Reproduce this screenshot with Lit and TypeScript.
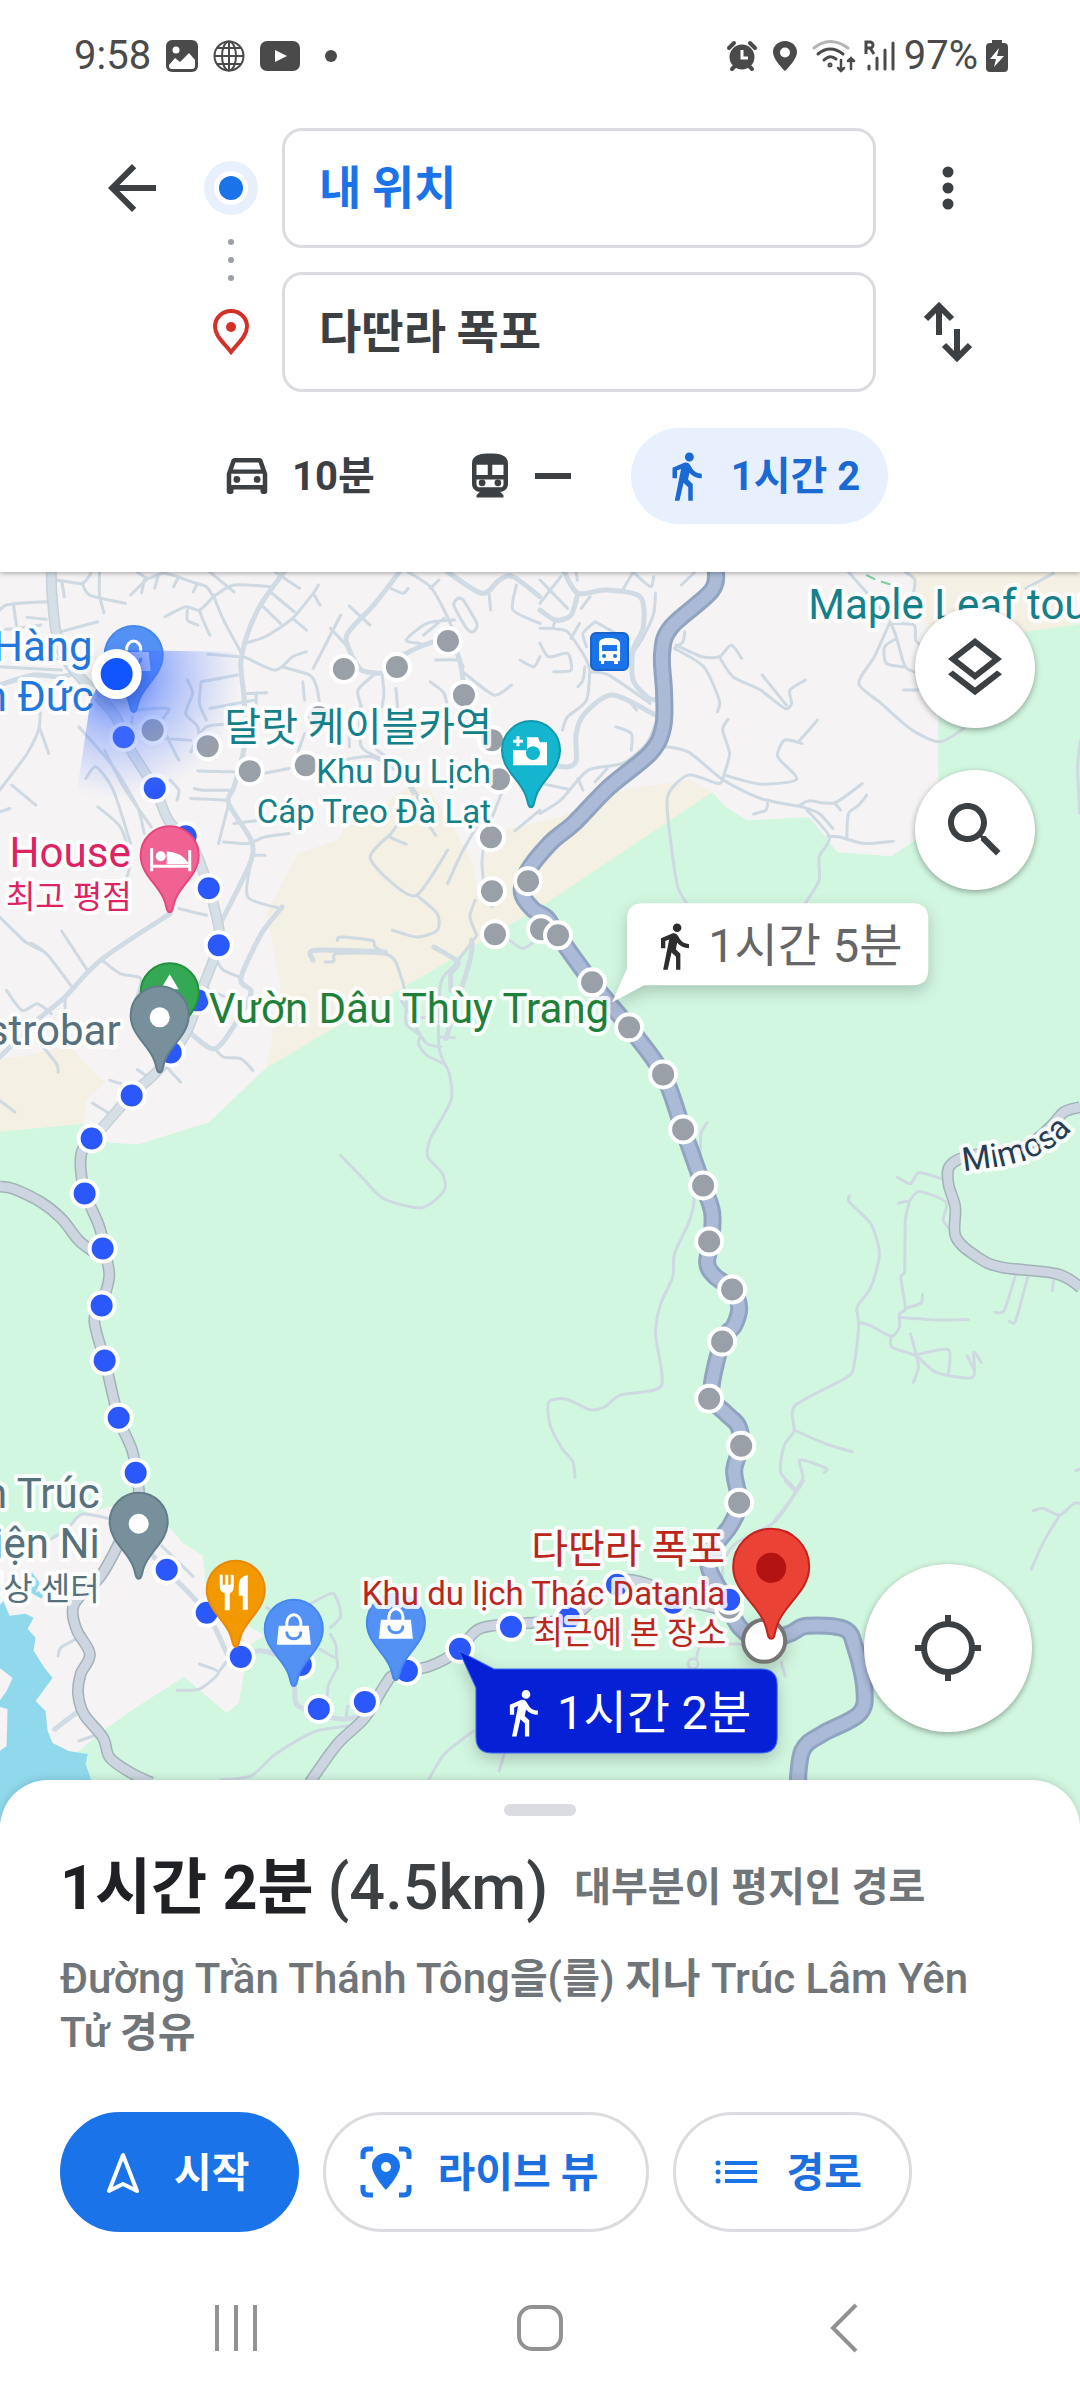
import { LitElement, html, svg, css } from "lit";
import { customElement } from "lit/decorators.js";

/* ---------- map data ---------- */

// Each survey sheet has an origin and a horizontal resolution; vertical is always 3 units per px.
const SHEETS: Record<string, [number, number, number]> = {
  A: [0, 560, 2.904],
  B: [540, 560, 2.904],
  C: [0, 900, 2.904],
  D: [540, 1040, 2.904],
  E: [0, 1300, 2.904],
  F: [500, 1480, 2.703],
};

type Pt = [number, number];

const parse = (s: string): Pt[] =>
  s.split(" ").map((p) => p.split(",").map(Number) as Pt);

const project = (sheet: string, s: string): Pt[] => {
  const [ox, oy, k] = SHEETS[sheet];
  return parse(s).map(([x, y]) => [ox + x / k, oy + y / 3]);
};

// Catmull-Rom spline through the points, written as cubic segments.
const curve = (p: Pt[], tension = 8): string => {
  let d = `M${p[0][0].toFixed(1)} ${p[0][1].toFixed(1)}`;
  for (let i = 0; i < p.length - 1; i++) {
    const a = p[i - 1] ?? p[i];
    const b = p[i];
    const c = p[i + 1];
    const e = p[i + 2] ?? c;
    const n = [
      b[0] + (c[0] - a[0]) / tension,
      b[1] + (c[1] - a[1]) / tension,
      c[0] - (e[0] - b[0]) / tension,
      c[1] - (e[1] - b[1]) / tension,
      c[0],
      c[1],
    ].map((v) => v.toFixed(1));
    d += `C${n.join(" ")}`;
  }
  return d;
};

const LANES: Record<string, string[]> = {
  A: [
    "0,150 20,135 80,128 145,125", "40,130 50,205", "80,172 135,178", "160,60 180,62 240,70 265,40",
    "180,62 188,110", "240,70 262,105 365,130", "290,36 290,105 303,158", "0,210 50,205 120,195",
    "160,220 285,185", "90,310 200,290", "0,320 90,325 180,330", "120,370 115,500 80,580 0,690",
    "115,500 143,580", "35,675 105,735", "0,755 30,745", "400,36 430,55 480,40 570,70 600,80 620,110",
    "430,55 380,105", "420,60 412,98", "460,48 450,85", "520,50 505,80", "575,70 562,95",
    "620,110 680,75 790,80", "480,170 540,140 580,150 620,110", "580,150 590,180 610,225",
    "545,150 545,180 575,195", "610,36 680,95", "620,105 650,180 705,285",
    "710,250 770,230 850,175 910,100 925,75", "785,95 855,155", "760,135 815,190", "800,36 870,85",
    "850,175 890,210", "910,100 930,135", "710,290 800,330 850,290 890,275", "605,283 700,290",
    "820,320 900,345 920,380 930,440", "1110,340 1115,400 1110,440", "990,165 910,325",
    "960,205 1010,260", "1015,138 1075,195", "1125,80 1170,100 1185,85",
    "1185,36 1250,80 1290,150 1320,220", "1250,85 1275,60", "1320,180 1240,190 1180,240 1220,250",
    "1290,175 1230,225", "1330,115 1345,120 1385,190 1375,215 1355,205 1318,135 1330,115",
    "1420,100 1425,150", "1500,75 1490,150 1568,190", "1350,340 1435,405 1485,375",
    "1265,300 1330,300 1345,320", "1250,365 1290,400 1300,450", "1050,440 1040,390 1085,345",
    "1150,385 1155,440", "545,360 560,400 540,460 575,500 580,560", "585,365 580,430 600,480",
    "585,365 690,345", "610,445 740,420", "710,400 775,398", "745,400 745,460",
    "250,655 280,620 330,690 380,850", "305,570 360,680 440,800", "230,500 330,620 400,740 420,820",
    "285,740 350,800 380,900 360,980", "390,450 490,445 470,490 510,580", "470,535 555,540",
    "555,575 600,500 710,490", "575,632 680,635 760,640 840,625", "555,715 660,720",
    "565,685 590,690 680,690", "650,845 720,850 770,830 840,820", "665,730 635,850", "680,790 760,780",
    "730,885 770,885", "730,900 720,1010 820,1045", "520,1045 600,1065", "860,630 865,580 885,520",
    "1015,480 1015,560", "1100,450 1090,560 1150,610 1200,700", "995,600 1080,590 1160,640 1210,700 1210,740",
    "1045,440 1050,560 1120,600", "1130,830 1200,740 1265,825", "1130,830 1180,852",
    "1130,825 1075,890 1130,960 1210,1005 1300,870", "1210,1005 1270,1060 1270,1110 1210,1130 1140,1110",
    "1395,780 1340,880 1300,970", "1460,690 1420,800 1400,900 1410,1000 1430,1040", "1568,750 1495,812",
    "0,1070 70,1140 120,1170", "480,520 520,600", "380,545 385,470", "495,660 520,690 515,720",
    "1510,300 1550,320 1568,290", "880,365 885,420",
  ],
  B: [
    "0,60 80,145", "60,50 0,130", "105,36 108,60", "145,110 120,145", "240,90 270,36",
    "270,36 320,80 330,50", "335,100 330,160 300,230 262,290", "45,180 40,205 80,215 130,290 145,330",
    "0,205 40,205", "90,235 115,190", "0,250 25,290 80,280 90,330 40,335", "160,185 125,220 135,260",
    "160,185 220,220", "145,335 200,345 320,430", "145,320 135,420 80,470 65,510", "130,320 125,360 110,380",
    "265,430 280,450", "220,500 265,520 265,570", "0,760 60,720 140,630 240,610 310,550 335,490",
    "15,672 85,688", "110,655 125,690", "160,665 195,625", "410,75 450,36", "420,215 415,245 395,260",
    "395,255 470,290 520,290 555,255 585,295", "390,265 475,320 520,420 515,455",
    "520,290 560,350 640,390 710,445 730,430 725,390 770,360", "645,345 715,435",
    "545,478 530,510 550,580 535,640 530,660", "535,645 640,672 745,657 690,590 710,540 760,550",
    "750,545 805,480", "355,558 430,575 530,658 640,715 760,740", "750,738 780,722 855,728 935,670",
    "855,728 872,750", "530,660 515,670 430,645 370,710 380,850 400,980 425,1028",
    "620,762 655,750 660,730", "760,740 810,760 850,805", "775,750 840,830 810,890 810,960 770,1028",
    "835,828 870,830 940,850 1025,843", "890,830 895,760 925,735 948,705",
    "895,36 950,100 990,150", "1018,180 970,290 925,370 990,430 1080,510 1160,545 1230,505",
    "1015,180 1035,235 1060,320 1100,340", "1035,235 1000,260 1005,310 1055,320",
    "1020,190 1085,195 1090,240 1110,260", "1055,390 1095,390", "1060,36 1088,60 1080,120", "1490,40 1410,85",
    "1568,540 1560,620 1566,760",
  ],
  C: [
    "0,50 75,125 95,130 140,165 210,260", "180,92 255,210", "295,178 350,220 410,235 395,300",
    "20,270 65,330 110,310 150,340", "190,290 190,350", "110,420 165,490 170,515", "0,600 45,635",
    "270,608 320,640", "320,540 370,555", "400,508 425,525", "490,505 525,545",
    "625,445 650,470 700,475 735,510", "635,190 650,210 695,230", "580,255 655,290",
    "945,185 970,183 980,160 1130,165 1165,230 1180,300 1180,370 1220,405 1215,430 1240,465 1290,490",
    "980,120 990,110 1080,120 1090,140 1130,165",
    "1385,105 1320,195 1280,250 1275,440 1305,520 1310,600 1250,715 1243,770 1285,820 1290,870 1225,922 1115,895 1060,840 990,765",
    "1275,410 1320,412", "1210,385 1240,430 1280,440", "1165,300 1200,350 1240,350",
    "1480,120 1520,145 1568,110", "1385,105 1365,50 1380,0",
  ],
  D: [
    "485,247 467,280 465,350",
    "430,340 447,480 430,550 390,640 385,710 350,790 335,880 352,1035 235,1063 185,1100 145,1107 75,1075 25,1085 30,1155 65,1225 95,1262 102,1310",
    "898,465 898,485 960,550 985,640 960,740 920,800 925,850 912,970 890,1010 740,1095 737,1170 708,1215 698,1295 740,1352 680,1440",
    "925,845 960,855 1018,887 1043,860 1043,820 1060,803 1047,710 1058,690 1060,540 1070,485 1040,488",
    "1070,485 1100,453 1178,485 1170,540 1195,572", "1037,410 1075,430 1100,397 1175,418",
    "1060,803 1105,788 1110,762", "1043,830 1150,838 1243,837",
    "1018,887 1022,920 1090,945 1150,995 1255,1010 1258,935 1280,965", "1240,945 1258,985",
    "1075,880 1098,975 1083,1025", "1090,943 1185,927 1185,1000", "737,1168 830,1210 905,1233",
    "740,1352 763,1310 755,1258 830,1283 825,1295", "1380,703 1347,810 1320,815",
    "1417,703 1380,840 1362,842", "1490,720 1487,750", "1555,1290 1568,1285",
  ],
  E: [
    "470,735 562,827", "150,715 200,680 240,640 325,655", "170,1065 178,1040 230,1010",
    "230,1320 285,1300", "580,1090 635,1115 580,1165 515,1168", "635,1115 660,1080",
    "900,910 968,878 990,945 960,980", "930,1045 975,1070 975,1030 960,1000",
    "978,1070 980,1100 955,1150 950,1200", "1010,1215 1005,1250",
    "1060,1270 920,1290 800,1360 730,1425 640,1437", "1375,1290 1290,1360 1245,1437",
    "1465,1355 1450,1410", "775,920 850,970", "780,1050 840,1080 860,1150",
  ],
  F: [
    "1440,90 1468,83 1512,103 1550,68 1568,68", "1512,103 1470,180 1435,265",
    "820,0 800,35 740,125 640,185 605,240 600,300", "770,0 800,35", "760,545 770,585",
    "530,535 548,490 650,490",
  ],
};

const STREETS: [string, string][] = [
  ["A", "825,36 760,130 720,220 700,310 710,420 710,560 680,680 665,730 730,840 730,900 690,990 640,1090"],
  ["A", "1160,36 1090,130 1010,220 1015,270 1050,330 1110,340"],
  ["A", "1170,285 1230,255 1300,240 1335,300 1350,400"],
  ["A", "1300,36 1400,100 1450,60 1490,50 1568,110"],
  ["A", "0,375 100,345 180,350 240,330"],
  ["C", "495,40 295,178 190,290 120,350 0,470"],
  ["C", "550,395 625,445 690,360 730,275 700,235 760,100 820,20"],
  ["B", "70,36 110,100 190,90 290,110 300,200 270,270 270,360 310,410 335,420"],
  ["B", "110,100 90,165 45,180 0,150"],
  ["B", "335,465 210,405 130,460 105,520 105,600 80,620 0,610"],
  ["C", "910,180 915,150 1120,155"],
  ["C", "1260,140 1330,185 1310,220 1310,270"],
  ["C", "1370,120 1365,180 1295,415"],
  ["E", "440,760 484,808 600,935 660,1060"],
  ["E", "701,1068 760,1050 830,1080 855,1150 862,1210 925,1240 1000,1255 1060,1240"],
  ["E", "230,1230 160,1285"],
];

const CITY_ARTERIALS: [string, string][] = [
  ["A", "150,36 152,100 165,220 200,310 330,460 375,560 450,684 490,780 560,860 600,960 636,1100 636,1155"],
  ["C", "636,130 620,180 590,260 540,400 460,510 382,584 300,680 268,715"],
];

const ARTERIALS: [string, string][] = [
  ["C", "268,715 240,750 235,800 248,878 290,980 310,1070 318,1130 300,1200 275,1260 306,1380"],
  ["C", "0,858 40,865 120,905 180,955 230,1020 275,1055"],
  ["E", "306,180 345,350 385,450 400,540 400,600 340,740 290,830 230,890 212,930 225,990 262,1060 235,1120 228,1180 245,1240 300,1310 320,1370 380,1415 440,1445"],
  ["E", "900,1445 980,1330 1060,1250 1120,1150 1150,1120 1250,1095 1330,1050 1390,985 1485,970 1560,965"],
  ["F", "90,430 187,412 240,370 317,300 400,310 467,350 618,390"],
  ["D", "1568,200 1520,215 1480,260 1400,320 1250,345 1190,375 1185,430 1205,500 1207,590 1270,650 1340,680 1500,700 1568,740"],
];

const HIGHWAY =
  "715,565 712,590 671,627 662,653 664,693 663,727 650,753 609,787 574,823 550,843 527,872 522,893 533,909 547,918 558,935 592,982 629,1027 663,1074 683,1129 703,1185 712,1212 711,1240 707,1262 714,1275 732,1289 739,1307 734,1325 722,1341 711,1393 725,1412 738,1425 741,1445 734,1470 739,1502 730,1525 711,1550 709,1568 722,1593 740,1627 764,1640 789,1633 807,1625 844,1628 855,1647 864,1687 859,1713 822,1733 802,1750 797,1790";

const GREY_STOPS: Pt[] = [
  [153, 730], [208, 746], [250, 771], [306, 765], [319, 717], [344, 669], [397, 667], [448, 641],
  [464, 695], [492, 740], [499, 779], [491, 837], [492, 891], [495, 934], [528, 881], [541, 929],
  [558, 935], [592, 982], [629, 1027], [663, 1074], [683, 1129], [703, 1185], [709, 1241],
  [732, 1289], [722, 1341], [709, 1398], [741, 1445], [739, 1502], [711, 1552], [729, 1607],
];

const BLUE_STOPS: Pt[] = [
  [124, 737], [155, 788], [186, 836], [209, 888], [219, 945], [198, 1000], [171, 1052], [132, 1095],
  [92, 1138], [85, 1193], [103, 1248], [102, 1305], [105, 1360], [119, 1417], [136, 1472],
  [167, 1569], [207, 1612], [241, 1656], [301, 1664], [319, 1708], [365, 1701], [407, 1670],
  [460, 1648], [511, 1626], [569, 1617], [617, 1584], [673, 1602], [729, 1599],
];

/* ---------- shared glyphs ---------- */

const WALK =
  "M13.5 5.5c1.1 0 2-.9 2-2s-.9-2-2-2-2 .9-2 2 .9 2 2 2zM9.8 8.9L7 23h2.1l1.8-8 2.1 2v6h2v-7.5l-2.1-2 .6-3C14.8 12 16.8 13 19 13v-2c-1.9 0-3.5-1-4.3-2.4l-1-1.6c-.4-.6-1-1-1.7-1-.3 0-.5.1-.8.1L6 8.3V13h2V9.6l1.8-.7";

const PIN =
  "M0 0C-3 0-3-5-5-11C-10-27-29-37-29-57A29 29 0 0 1 29-57C29-37 10-27 5-11C3-5 3 0 0 0Z";

const bag = svg`
  <path fill="#fff" d="M-15-60H15L17-41H-17Z"/>
  <path fill="none" stroke="#fff" stroke-width="3" d="M-7-58V-63A7 8 0 0 1 7-63V-58"/>
  <path fill="none" stroke="#5491f5" stroke-width="3" stroke-linecap="round" d="M-7-53A7 6 0 0 0 7-53"/>`;

const pin = (x: number, y: number, fill: string, edge: string, glyph: unknown) => svg`
  <g transform="translate(${x} ${y})">
    <path d=${PIN} fill=${fill} stroke=${edge} stroke-width="2"/>${glyph}
  </g>`;

const stop = ([x, y]: Pt, color: string) => svg`
  <circle cx=${x} cy=${y} r="13" fill=${color} stroke="#fff" stroke-width="4"/>`;

/* ---------- map ---------- */

@customElement("route-map")
export class RouteMap extends LitElement {
  static styles = css`
    :host { display: block; position: relative; overflow: hidden; }
    .canvas { position: absolute; inset: 0; display: block; width: 100%; height: 100%; }
    .lane { fill: none; stroke: #cfd9e2; stroke-width: 3; stroke-linecap: round; stroke-linejoin: round; }
    .street { fill: none; stroke: #d0dbe3; stroke-width: 5; stroke-linecap: round; }
    .casing-city { fill: none; stroke: #c5d2d8; stroke-width: 11; }
    .fill-city { fill: none; stroke: #d6dfe6; stroke-width: 8; }
    .casing { fill: none; stroke: #a2b3b8; stroke-width: 12; }
    .fill { fill: none; stroke: #ccd5e0; stroke-width: 9; }
    .hw-casing { fill: none; stroke: #90a4c0; stroke-width: 18; }
    .hw { fill: none; stroke: #aabad7; stroke-width: 12; }
    .label {
      font-family: Roboto, "Noto Sans CJK KR", sans-serif;
      paint-order: stroke;
      stroke: rgb(255 255 255 / .85);
      stroke-width: 8px;
      stroke-linejoin: round;
    }
    .lg { font-size: 42px; }
    .ko { font-size: 40px; }
    .md { font-size: 33px; }
    .sm { font-size: 32px; }
    .end { text-anchor: end; }
    .blue { fill: #2277dd; }
    .pink { fill: #dc2463; }
    .teal { fill: #14808a; }
    .green { fill: #1e8039; }
    .slate { fill: #56707c; }
    .red { fill: #ba261c; }
    .navy { fill: #263c50; }
    .tip { font-family: Roboto, "Noto Sans CJK KR", sans-serif; font-size: 47px; }
    .tip-alt { fill: #666; }
    .tip-main { fill: #fff; }
    .shadow { filter: drop-shadow(0 6px 8px rgb(0 0 0 / .2)); }
  `;

  render() {
    const arterials = ARTERIALS.map(([s, p]) => curve(project(s, p), 6)).join("");
    const city = CITY_ARTERIALS.map(([s, p]) => curve(project(s, p), 6)).join("");
    const streets = STREETS.map(([s, p]) => curve(project(s, p), 7)).join("");
    const lanes = Object.entries(LANES)
      .flatMap(([s, list]) => list.map((p) => curve(project(s, p))))
      .join("");
    const highway = curve(parse(HIGHWAY), 6);

    return html`
      <svg class="canvas" viewBox="0 572 1080 1250" preserveAspectRatio="xMidYMin slice" role="img" aria-label="지도">
        <defs>
          <radialGradient id="beam" gradientUnits="userSpaceOnUse" cx="117" cy="674" r="125">
            <stop offset="0" stop-color="#2e62ff" stop-opacity=".85"/>
            <stop offset=".45" stop-color="#4b78ff" stop-opacity=".42"/>
            <stop offset="1" stop-color="#7b9bff" stop-opacity="0"/>
          </radialGradient>
          <path id="mimosa" d="M963 1171C990 1167 1010 1166 1029 1158C1052 1149 1066 1140 1084 1112"/>
        </defs>

        <rect y="572" width="1080" height="1300" fill="#d2f7e1"/>
        <path fill="#f5f3f4" d="M0 572H938V820L915 840L891 856L837 852L824 835L809 817L747 820L726 807L712 792L540 895L267 1067L209 1122L138 1144L108 1142L84 1123L0 1131Z"/>
        <path fill="#f4f0e4" d="M0 1057H17L69 1045L105 1082L86 1100L84 1123L0 1131Z"/>
        <path fill="#f4f0e4" d="M267 1067L540 907L712 792L691 780L636 787L609 793L560 817L489 833L483 870L480 905L472 860L451 823L430 790L410 786L344 830L337 840L298 853L267 913L281 987Z"/>
        <path fill="#f4f0e4" d="M908 572H1080V624L1024 632L938 640L920 612Z"/>
        <path fill="#f5f3f4" d="M0 1560L52 1537L83 1513L114 1505L170 1527L183 1542L203 1555L208 1600L265 1635L245 1647L244 1673L239 1702L227 1712L184 1676L134 1708L107 1727L79 1750L50 1760L0 1760Z"/>
        <path fill="#90d9ed" d="M0 1592L10 1615L26 1613L34 1617L28 1628L36 1637L34 1650L45 1667L53 1677L36 1700L46 1710L48 1730L53 1742L69 1750L88 1753L86 1763L92 1780V1830H0V1750L7 1745L8 1708L0 1706V1700L7 1690L13 1677L0 1667ZM32 1571L40 1582L36 1592L48 1586L42 1598L28 1590Z"/>

        <path class="lane" d=${lanes}/>
        <path class="street" d=${streets}/>
        <circle class="lane" cx="693" cy="1663" r="5"/>
        <path class="casing-city" d=${city}/>
        <path class="fill-city" d=${city}/>
        <path class="casing" d=${arterials}/>
        <path class="fill" d=${arterials}/>
        <path class="hw-casing" d=${highway}/>
        <path class="hw" d=${highway}/>
        <path fill="none" stroke="#7fcf9f" stroke-width="2" stroke-dasharray="10 6" d="M866 575L876 580L892 585"/>

        ${GREY_STOPS.map((p) => stop(p, "#9aa0a8"))}
        ${BLUE_STOPS.map((p) => stop(p, "#2b58fa"))}

        <g>
          <rect x="591" y="633" width="37" height="37" rx="5" fill="#1a73e8" stroke="#1962cb" stroke-width="2"/>
          <path fill="#fff" d="M599 643Q599 638 609 638T620 643V661H618V664H614V661H604V664H601V661H599Z"/>
          <path fill="#1a73e8" d="M602 645H617V651H602Z"/>
          <circle cx="604" cy="656" r="2" fill="#1a73e8"/><circle cx="615" cy="656" r="2" fill="#1a73e8"/>
        </g>

        ${pin(134, 712, "#5491f5", "#4687ee", bag)}
        ${pin(531, 807, "#14b5ce", "#1397ab", svg`
          <path fill="#fff" d="M-14-57H-4V-70H7L9-65H16V-42H-18V-57Z"/>
          <circle cx="2" cy="-54" r="7" fill="#14b5ce"/>
          <path stroke="#fff" stroke-width="3" d="M-18-66H-8M-13-71V-61"/>`)}
        ${pin(170, 912, "#f06292", "#e8457c", svg`
          <path stroke="#fff" stroke-width="3" fill="none" d="M-18-64V-41M20-62V-41M-18-46H20"/>
          <circle cx="-9" cy="-56" r="5" fill="#fff"/>
          <path fill="#fff" d="M-3-50V-61Q12-60 19-49V-48H-3Z"/>`)}
        ${pin(170, 1049, "#34a853", "#26903f", svg`<path fill="#fff" d="M0-75L9-60H-9Z"/>`)}
        ${pin(160, 1072, "#78909c", "#627c89", svg`<circle cy="-55" r="10" fill="#fff"/>`)}
        ${pin(139, 1578, "#78909c", "#627c89", svg`<circle cy="-55" r="10" fill="#fff"/>`)}
        ${pin(236, 1646, "#f29900", "#e8890a", svg`
          <path fill="#fff" d="M-16-72h3v10h2.500v-10h3v10h2.500v-10h3v12q0 5-4 6.500v17h-5v-17q-5-1.500-5-6.500zM12-72v35h-5v-14h-4v-10q0-9 9-11z"/>`)}
        ${pin(294, 1685, "#5491f5", "#4687ee", bag)}
        ${pin(396, 1679, "#5491f5", "#4687ee", bag)}

        <text class="label lg end blue" x="93" y="661">Hàng</text>
        <text class="label lg end blue" x="94" y="711">n Đức</text>
        <path fill="url(#beam)" d="M117 650L245 652L245 800H76L91 700Z"/>
        <circle class="shadow" cx="117" cy="674" r="25" fill="#fff"/>
        <circle cx="117" cy="674" r="16" fill="#1155ff"/>

        <text class="label lg end pink" x="131" y="867">House</text>
        <text class="label sm end pink" x="132" y="908">최고 평점</text>
        <text class="label ko end teal" x="492" y="741">달랏 케이블카역</text>
        <text class="label md end teal" x="491" y="783">Khu Du Lịch</text>
        <text class="label md end teal" x="491" y="823">Cáp Treo Đà Lạt</text>
        <text class="label lg green" x="209" y="1023">Vườn Dâu Thùy Trang</text>
        <text class="label lg end slate" x="121" y="1045">strobar</text>
        <text class="label lg end slate" x="100" y="1507">n Trúc</text>
        <text class="label lg end slate" x="100" y="1557">iện Ni</text>
        <text class="label sm end slate" x="100" y="1599">명상 센터</text>
        <text class="label lg teal" x="808" y="619">Maple Leaf tou</text>
        <text class="label md navy"><textPath href="#mimosa">Mimosa</textPath></text>

        <circle class="shadow" cx="764" cy="1640" r="21" fill="#fff" stroke="#757575" stroke-width="4"/>
        <text class="label ko end red" x="725" y="1562">다딴라 폭포</text>
        <text class="label md end red" x="725" y="1604">Khu du lịch Thác Datanla</text>
        <text class="label sm end red" x="726" y="1643">최근에 본 장소</text>
        <g transform="translate(771 1638)">
          <path fill="#ea4335" stroke="#c5221f" stroke-width="2" d="M0 0C-4 0-3-6-6-14C-12-34-38-47-38-72A38 38 0 0 1 38-72C38-47 12-34 6-14C3-6 4 0 0 0Z"/>
          <circle cy="-71" r="15" fill="#b31412"/>
        </g>

        <g class="shadow">
          <path fill="#fff" d="M643 903H912Q928 903 928 919V969Q928 985 912 985H644L612 1002L627 968V919Q627 903 643 903Z"/>
        </g>
        <path fill="#2d2d2d" transform="translate(648 920) scale(2.150)" d=${WALK}/>
        <text class="tip tip-alt" x="708" y="962">1시간 5분</text>

        <g class="shadow">
          <path fill="#0621d5" stroke="#3d6bf0" stroke-width="1" d="M494 1668H761Q777 1668 777 1684V1736Q777 1752 761 1752H492Q476 1752 476 1736V1687L459 1650Z"/>
        </g>
        <path fill="#fff" transform="translate(497 1686) scale(2.150)" d=${WALK}/>
        <text class="tip tip-main" x="557" y="1728">1시간 2분</text>
      </svg>`;
  }
}

/* ---------- page ---------- */

@customElement("app-root")
export class AppRoot extends LitElement {
  static styles = css`
    :host {
      display: flex;
      flex-direction: column;
      min-height: 100vh;
      background: #fff;
      color: #3c4043;
      font-family: Roboto, "Noto Sans CJK KR", sans-serif;
    }
    button, input {
      font: inherit;
      color: inherit;
      border: 0;
      margin: 0;
      padding: 0;
      background: none;
      box-sizing: border-box;
    }
    svg { display: block; flex: none; }
    .icon { fill: currentColor; }

    .status {
      display: flex;
      align-items: center;
      justify-content: space-between;
      height: 112px;
      padding: 0 72px 0 74px;
      box-sizing: border-box;
      color: #4a4a4a;
      font-size: 40px;
      line-height: 48px;
    }
    .group { display: flex; align-items: center; gap: 15px; }
    .tight { gap: 8px; }

    .top {
      position: relative;
      z-index: 2;
      background: #fff;
      box-shadow: 0 1px 5px rgb(0 0 0 / .35);
    }
    .form {
      display: grid;
      grid-template-columns: 96px 54px 1fr 96px;
      grid-template-rows: 120px 120px;
      gap: 24px;
      padding: 16px 84px 36px;
    }
    .tool { display: flex; align-items: center; justify-content: center; }
    .marks {
      grid-column: 2;
      grid-row: 1 / 3;
      display: flex;
      flex-direction: column;
      align-items: center;
      gap: 24px;
      padding-top: 33px;
    }
    .field {
      grid-column: 3;
      width: 100%;
      min-width: 0;
      height: 120px;
      padding: 0 34px 8px;
      border: 3px solid #dadce0;
      border-radius: 20px;
      font-size: 46px;
      font-weight: 700;
      font-family: "Noto Sans CJK KR", sans-serif;
    }
    .origin { color: #1a73e8; }
    .modes { display: flex; gap: 32px; padding: 0 84px 48px 192px; }
    .mode {
      display: flex;
      align-items: center;
      gap: 18px;
      height: 96px;
      padding: 0 28px;
      border-radius: 48px;
      font-size: 40px;
      font-weight: 700;
      white-space: nowrap;
    }
    .text { padding-bottom: 6px; }
    .mode.on { background: #e8f0fe; color: #1b69d2; }

    .stage { position: relative; flex: 1; display: flex; min-height: 900px; }
    .stage route-map { flex: 1; min-width: 0; }
    .fabs {
      position: absolute;
      top: 36px;
      right: 45px;
      display: flex;
      flex-direction: column;
      gap: 42px;
    }
    .fab {
      display: flex;
      align-items: center;
      justify-content: center;
      width: 120px;
      height: 120px;
      border-radius: 50%;
      background: #fff;
      box-shadow: 0 2px 6px rgb(0 0 0 / .35);
    }
    .locate { position: absolute; right: 48px; bottom: 91px; width: 168px; height: 168px; }

    .sheet {
      position: relative;
      z-index: 1;
      margin-top: -43px;
      padding: 24px 60px;
      border-radius: 48px 48px 0 0;
      background: #fff;
      box-shadow: 0 -1px 8px rgb(0 0 0 / .15);
    }
    .handle { width: 72px; height: 12px; margin: 0 auto; border-radius: 6px; background: #dadce0; }
    .summary {
      display: flex;
      align-items: center;
      height: 72px;
      margin: 36px 0 28px;
      font-size: 61px;
      line-height: 72px;
      font-weight: 700;
      color: #202124;
      white-space: nowrap;
    }
    .distance { margin-left: 14px; font-size: 63px; font-weight: 500; color: #3c4043; }
    .note { margin-left: 26px; font-size: 40px; color: #70757a; }
    .via { margin: 0 0 52px; font-size: 42px; line-height: 54px; font-weight: 500; color: #70757a; }
    .via b { font-size: 41px; line-height: 1; }
    .actions { display: flex; gap: 24px; }
    .action {
      display: flex;
      align-items: center;
      gap: 24px;
      height: 120px;
      padding: 0 47px 0 33px;
      border: 3px solid #dadce0;
      border-radius: 60px;
      font-size: 41px;
      font-weight: 700;
      color: #1b6fdf;
      white-space: nowrap;
    }
    .primary { background: #1a73e8; border-color: #1a73e8; color: #fff; }

    .nav {
      position: relative;
      z-index: 2;
      display: grid;
      grid-template-columns: repeat(3, 1fr);
      height: 144px;
      padding: 0 84px;
      background: #fff;
    }
  `;

  render() {
    return html`
      <header class="top">
        <div class="status">
          <div class="group">
            <span>9:58</span>
            <svg width="32" height="32" viewBox="0 0 32 32">
              <rect width="32" height="32" rx="6" fill="#4a4a4a"/>
              <circle cx="10" cy="10" r="3.500" fill="#fff"/>
              <path fill="#fff" d="M3 25L9 18L14 22L23 13L29 20V26Q29 29 26 29H6Q3 29 3 26Z"/>
            </svg>
            <svg width="32" height="32" viewBox="0 0 32 32" fill="none" stroke="#4a4a4a" stroke-width="2">
              <circle cx="16" cy="16" r="14.500"/><ellipse cx="16" cy="16" rx="7" ry="14.500"/>
              <path d="M16 1V31M1 16H31M4 8H28M4 24H28"/>
            </svg>
            <svg width="40" height="30" viewBox="0 0 40 30">
              <rect width="40" height="30" rx="7" fill="#4a4a4a"/><path fill="#fff" d="M15 9L27 15L15 21Z"/>
            </svg>
            <svg width="32" height="12" viewBox="0 0 32 12"><circle cx="16" cy="6" r="6" fill="#4a4a4a"/></svg>
          </div>
          <div class="group tight">
            <svg width="32" height="32" viewBox="0 0 32 32">
              <circle cx="16" cy="17" r="12.500" fill="#4a4a4a"/>
              <path stroke="#fff" stroke-width="3" fill="none" d="M16 10V18H22"/>
              <path stroke="#4a4a4a" stroke-width="4" stroke-linecap="round" d="M3 8L8 3M29 8L24 3M6 29L9 26M26 29L23 26"/>
            </svg>
            <svg width="38" height="32" viewBox="0 0 38 32">
              <path fill="#4a4a4a" fill-rule="evenodd" d="M19 1C12 1 7 6 7 12C7 20 19 31 19 31S31 20 31 12C31 6 26 1 19 1ZM19 7.500A5 5 0 1 1 19 17.500A5 5 0 1 1 19 7.500Z"/>
            </svg>
            <svg width="44" height="34" viewBox="0 0 44 34" fill="none" stroke="#4a4a4a" stroke-width="3" stroke-linecap="round">
              <path stroke="#b4b4b4" d="M2 9Q18-4 36 9"/><path d="M6 15Q18 5 31 15"/><path d="M12 21Q18 15 24 20"/>
              <circle cx="18" cy="26" r="1"/>
              <path stroke-width="2.500" d="M29 21V32M26 29L29 32L32 29M39 30V19M36 22L39 19L42 22"/>
            </svg>
            <svg width="32" height="32" viewBox="0 0 32 32" fill="none" stroke="#4a4a4a">
              <path stroke-width="3" d="M2 14V2H6A3 3 0 0 1 6 8H2M6 8L10 14"/>
              <path stroke-width="3" stroke-linecap="round" d="M5 26V29M13 18V29M21 10V29M29 3V29"/>
            </svg>
            <span>97%</span>
            <svg width="22" height="32" viewBox="0 0 22 32">
              <path fill="#4a4a4a" d="M6 0H16V3H18Q22 3 22 7V28Q22 32 18 32H4Q0 32 0 28V7Q0 3 4 3H6Z"/>
              <path fill="#fff" d="M13 8L4 19H10L8 27L18 16H11Z"/>
            </svg>
          </div>
        </div>

        <form class="form" @submit=${(e: Event) => e.preventDefault()}>
          <button class="tool" type="button" aria-label="뒤로">
            <svg class="icon" width="72" height="72" viewBox="0 0 24 24"><path d="M20 11H7.830l5.590-5.590L12 4l-8 8 8 8 1.410-1.410L7.830 13H20v-2z"/></svg>
          </button>
          <div class="marks">
            <svg width="54" height="54" viewBox="0 0 54 54">
              <circle cx="27" cy="27" r="27" fill="#e8f0fe"/><circle cx="27" cy="27" r="17" fill="#fff"/>
              <circle cx="27" cy="27" r="12" fill="#1a73e8"/>
            </svg>
            <svg width="6" height="46" viewBox="0 0 6 46" fill="#9aa0a6">
              <circle cx="3" cy="3" r="3"/><circle cx="3" cy="21" r="3"/><circle cx="3" cy="39" r="3"/>
            </svg>
            <svg width="38" height="46" viewBox="0 0 38 46">
              <path fill="none" stroke="#d33027" stroke-width="4" d="M19 43C12 34 3 27 3 17.500A16 15.500 0 0 1 35 17.500C35 27 26 34 19 43Z"/>
              <circle cx="19" cy="18" r="5" fill="#d33027"/>
            </svg>
          </div>
          <input class="field origin" type="text" aria-label="출발지" .value=${"내 위치"}>
          <button class="tool" type="button" aria-label="옵션 더보기">
            <svg class="icon" width="12" height="44" viewBox="0 0 12 44"><circle cx="6" cy="6" r="5.500"/><circle cx="6" cy="22" r="5.500"/><circle cx="6" cy="38" r="5.500"/></svg>
          </button>
          <input class="field" type="text" aria-label="도착지" .value=${"다딴라 폭포"}>
          <button class="tool" type="button" aria-label="출발지와 도착지 바꾸기">
            <svg width="48" height="60" viewBox="0 0 48 60" fill="none" stroke="currentColor" stroke-width="6">
              <path d="M15 33V5M2 17L15 4L28 17"/><path d="M33 27V55M20 43L33 56L46 43"/>
            </svg>
          </button>
        </form>

        <div class="modes">
          <button class="mode" type="button" aria-label="자동차 10분">
            <svg class="icon" width="54" height="54" viewBox="0 0 24 24"><path d="M18.920 5.010C18.720 4.420 18.160 4 17.500 4h-11c-.66 0-1.210.42-1.420 1.010L3 11v8c0 .55.45 1 1 1h1c.55 0 1-.45 1-1v-1h12v1c0 .55.45 1 1 1h1c.55 0 1-.45 1-1v-8l-2.080-5.990zM6.850 6h10.290l1.080 3.110H5.770L6.850 6zM19 16H5v-5h14v5z"/><circle cx="7.500" cy="13.500" r="1.500"/><circle cx="16.500" cy="13.500" r="1.500"/></svg>
            <span class="text">10분</span>
          </button>
          <button class="mode" type="button" aria-label="대중교통">
            <svg class="icon" width="54" height="54" viewBox="0 0 24 24"><path fill-rule="evenodd" d="M12 2C8 2 4 2.500 4 6.500v9C4 17.430 5.570 19 7.500 19L6 20.500V21.500h12V20.500L16.500 19c1.930 0 3.500-1.570 3.500-3.500v-9C20 2.500 16 2 12 2zM6 7h5v4.500H6zM13 7h5v4.500h-5zM6 13.500h12v2A1.500 1.500 0 0 1 16.500 17h-9A1.500 1.500 0 0 1 6 15.500z"/><circle cx="8.500" cy="15" r="1.500"/><circle cx="15.500" cy="15" r="1.500"/></svg>
            <svg width="36" height="6" viewBox="0 0 36 6"><path fill="currentColor" d="M0 0H36V6H0Z"/></svg>
          </button>
          <button class="mode on" type="button" aria-pressed="true">
            <svg class="icon" width="54" height="54" viewBox="0 0 24 24"><path d=${WALK}/></svg>
            <span class="text">1시간 2</span>
          </button>
        </div>
      </header>

      <main class="stage">
        <route-map></route-map>
        <div class="fabs">
          <button class="fab" type="button" aria-label="지도 유형">
            <svg class="icon" width="72" height="72" viewBox="0 0 24 24"><path d="M11.990 18.540l-7.370-5.730L3 14.070l9 7 9-7-1.630-1.270-7.380 5.740zM12 16l7.360-5.730L21 9l-9-7-9 7 1.630 1.270L12 16zm0-11.470L17.740 9 12 13.470 6.260 9 12 4.530z"/></svg>
          </button>
          <button class="fab" type="button" aria-label="검색">
            <svg class="icon" width="72" height="72" viewBox="0 0 24 24"><path d="M15.500 14h-.79l-.28-.27C15.410 12.590 16 11.110 16 9.500 16 5.910 13.090 3 9.500 3S3 5.910 3 9.500 5.910 16 9.500 16c1.610 0 3.090-.59 4.230-1.570l.27.28v.79l5 4.990L20.490 19l-4.990-5zm-6 0C7.010 14 5 11.990 5 9.500S7.010 5 9.500 5 14 7.010 14 9.500 11.990 14 9.500 14z"/></svg>
          </button>
        </div>
        <button class="fab locate" type="button" aria-label="내 위치로 이동">
          <svg width="68" height="68" viewBox="0 0 68 68" fill="none" stroke="currentColor" stroke-width="6">
            <circle cx="34" cy="34" r="24"/><path d="M34 1V11M34 57V67M1 34H11M57 34H67"/>
          </svg>
        </button>
      </main>

      <section class="sheet">
        <div class="handle"></div>
        <div class="summary">
          <span>1시간 2분</span>
          <span class="distance">(4.5km)</span>
          <span class="note">대부분이 평지인 경로</span>
        </div>
        <p class="via">Đường Trần Thánh Tông<b>을</b>(<b>를</b>) <b>지나</b> Trúc Lâm Yên Tử <b>경유</b></p>
        <div class="actions">
          <button class="action primary" type="button">
            <svg width="54" height="54" viewBox="0 0 54 54"><path fill="none" stroke="#fff" stroke-width="4" stroke-linejoin="round" d="M27 10L13 46L27 39L41 46Z"/></svg>
            <span class="text">시작</span>
          </button>
          <button class="action" type="button">
            <svg width="54" height="54" viewBox="0 0 54 54">
              <path fill="none" stroke="#1a73e8" stroke-width="5" d="M4 14V9Q4 4 9 4H14M40 4H45Q50 4 50 9V14M50 40V45Q50 50 45 50H40M14 50H9Q4 50 4 45V40"/>
              <path fill="#1a73e8" fill-rule="evenodd" d="M27 8C19 8 13 14 13 21C13 30 27 45 27 45S41 30 41 21C41 14 35 8 27 8ZM27 17A5 5 0 1 1 27 27A5 5 0 1 1 27 17Z"/>
            </svg>
            <span class="text">라이브 뷰</span>
          </button>
          <button class="action" type="button">
            <svg width="54" height="54" viewBox="0 0 54 54" fill="#1a73e8">
              <path d="M16 16H48V20H16ZM16 25H48V29H16ZM16 34H48V38H16Z"/>
              <circle cx="9" cy="18" r="2.500"/><circle cx="9" cy="27" r="2.500"/><circle cx="9" cy="36" r="2.500"/>
            </svg>
            <span class="text">경로</span>
          </button>
        </div>
      </section>

      <nav class="nav" aria-label="시스템">
        <button class="tool" type="button" aria-label="최근 앱">
          <svg width="44" height="48" viewBox="0 0 44 48" fill="none" stroke="#929292" stroke-width="4"><path d="M3 1V47M22 1V47M41 1V47"/></svg>
        </button>
        <button class="tool" type="button" aria-label="홈">
          <svg width="48" height="48" viewBox="0 0 48 48" fill="none" stroke="#929292" stroke-width="4"><rect x="3" y="3" width="42" height="42" rx="13"/></svg>
        </button>
        <button class="tool" type="button" aria-label="뒤로 가기">
          <svg width="28" height="50" viewBox="0 0 28 50" fill="none" stroke="#929292" stroke-width="4"><path d="M26 2L3 25L26 48"/></svg>
        </button>
      </nav>`;
  }
}
